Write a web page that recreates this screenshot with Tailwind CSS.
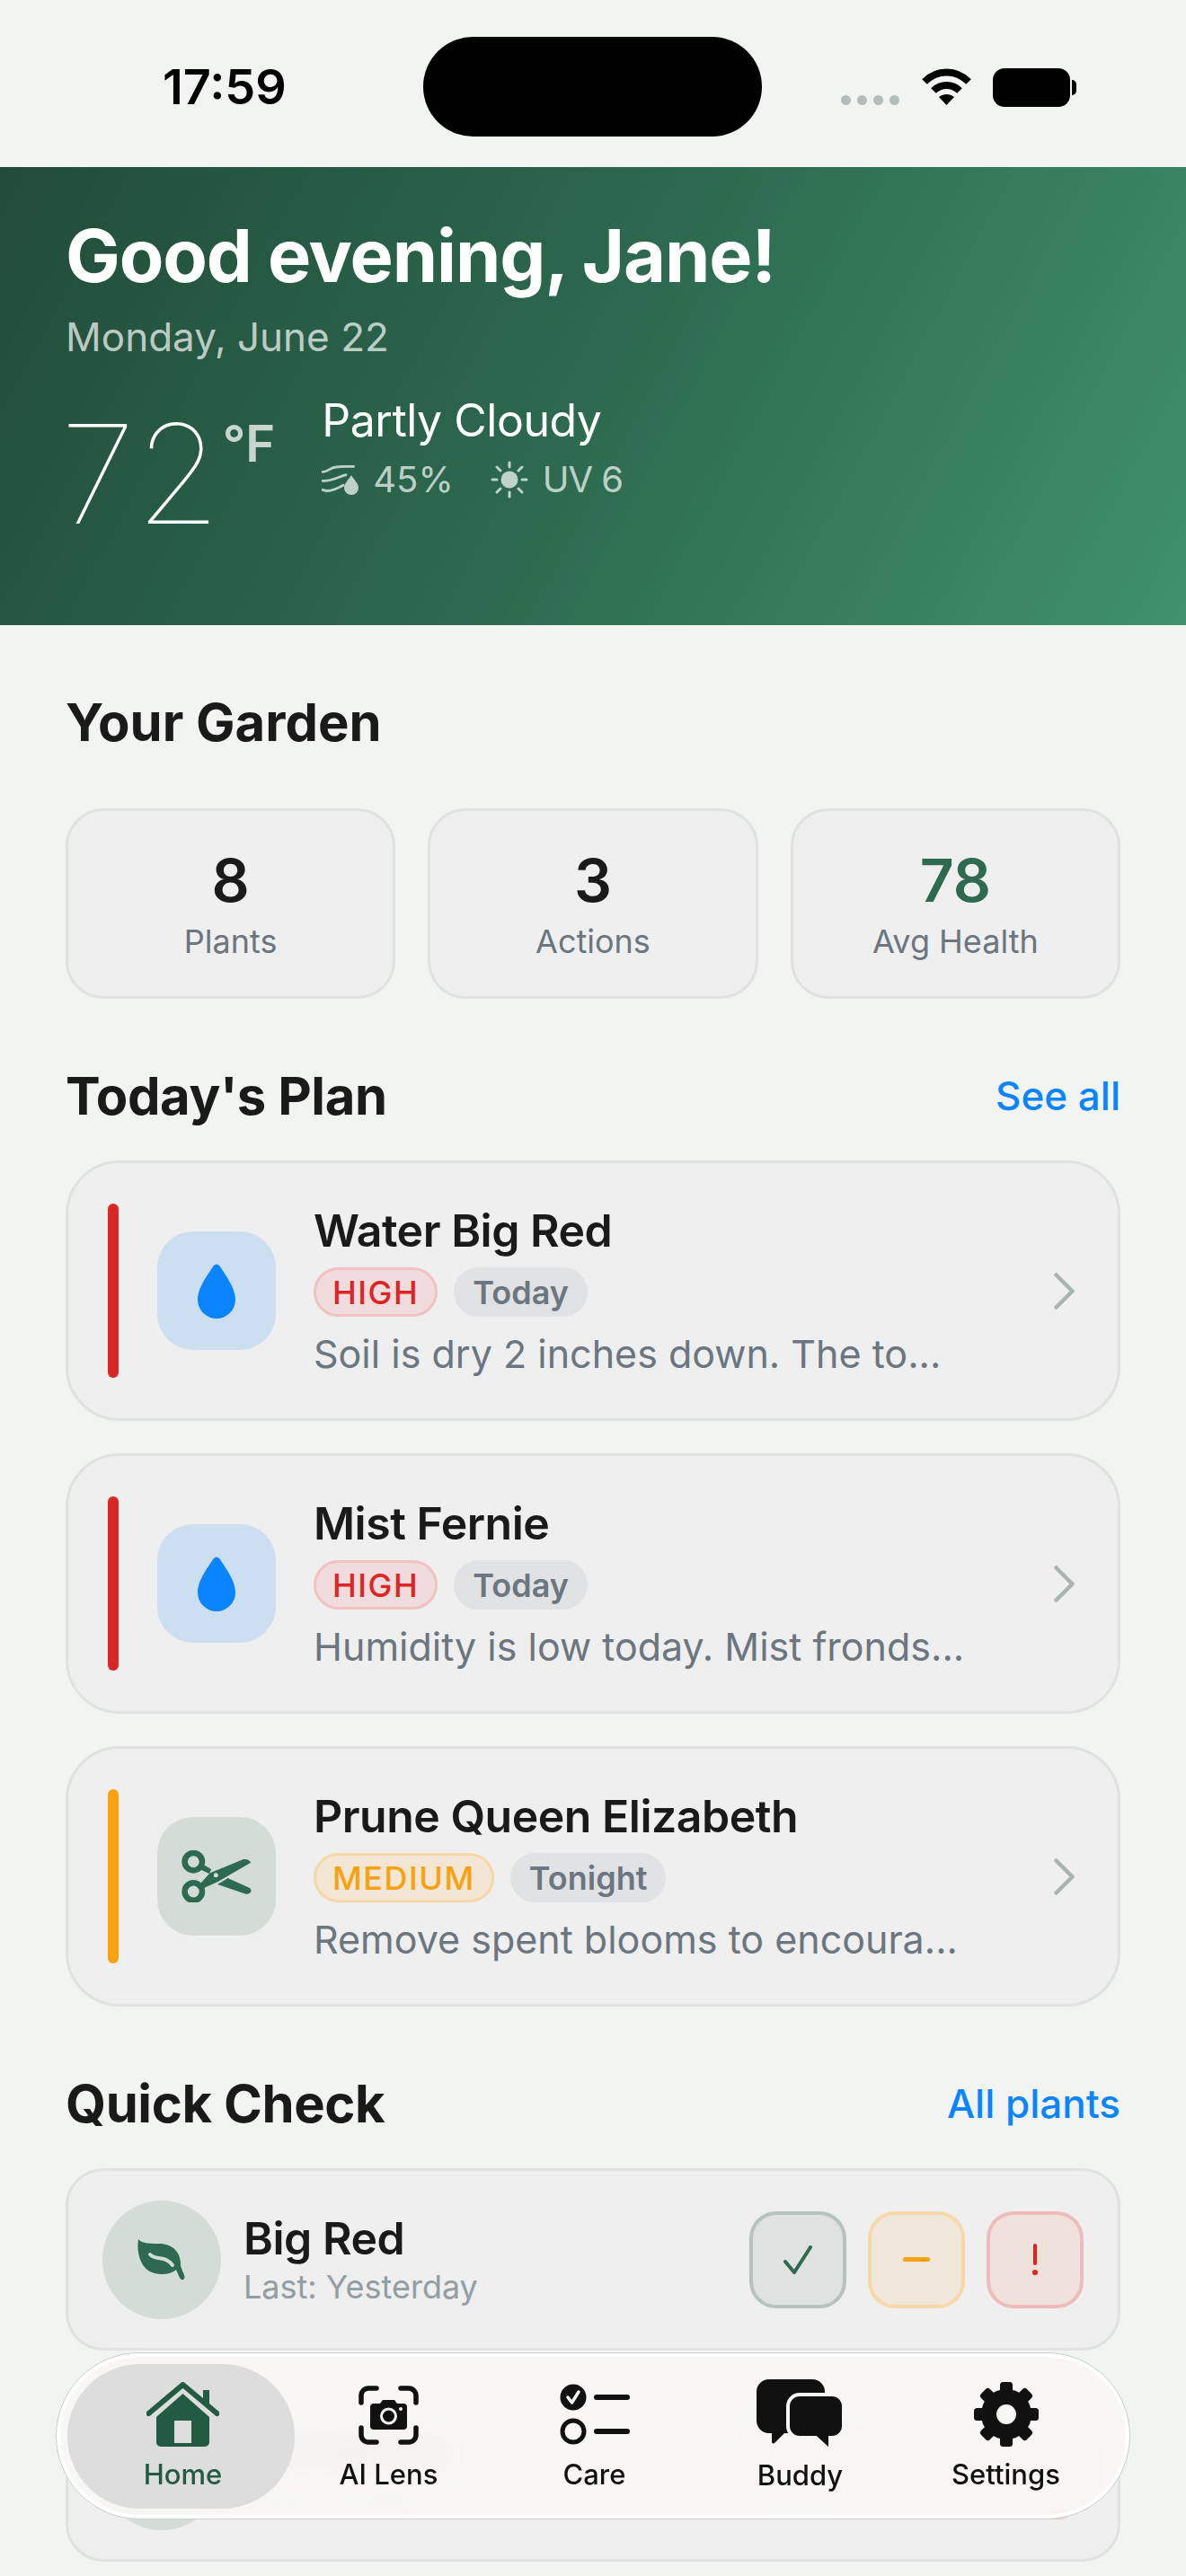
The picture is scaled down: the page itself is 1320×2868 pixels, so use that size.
<!DOCTYPE html>
<html lang="en">
<head>
    <meta charset="UTF-8">
    <title>Garden Home</title>
    <script src="https://cdn.jsdelivr.net/npm/@tailwindcss/browser@4"></script>
</head>
<body class="bg-[#f2f4f1] font-['Inter',sans-serif] text-[#1a1a1a]">
<div class="relative h-[2868px] w-[1320px] overflow-hidden">

    <!-- status bar -->
    <div class="relative flex h-[186px] items-start">
        <span class="ml-[181px] mt-[69px] text-[54px] font-semibold leading-[56px] text-black">17:59</span>
        <div class="absolute left-[471px] top-[41px] h-[111px] w-[377px] rounded-full bg-black"></div>
        <div class="absolute left-[936px] top-[106px] flex gap-[7px]">
            <span class="h-[11px] w-[11px] rounded-full bg-[#b4bcbc]"></span>
            <span class="h-[11px] w-[11px] rounded-full bg-[#b4bcbc]"></span>
            <span class="h-[11px] w-[11px] rounded-full bg-[#b4bcbc]"></span>
            <span class="h-[11px] w-[11px] rounded-full bg-[#b4bcbc]"></span>
        </div>
        <svg class="absolute left-[1025px] top-[76px]" width="57" height="42" viewBox="0 0 57 42" fill="none" stroke="#000" stroke-width="8">
            <path d="M4 15 C18 1 39 1 53 15"/>
            <path d="M14 25 C22 17 35 17 43 25"/>
            <path d="M28.500 41 L20 32 C25 28 32 28 37 32 Z" fill="#000" stroke="none"/>
        </svg>
        <div class="absolute left-[1105px] top-[76px] h-[43px] w-[86px] rounded-[13px] bg-black"></div>
        <div class="absolute left-[1193px] top-[89px] h-[17px] w-[5px] rounded-r-full bg-black"></div>
    </div>

    <!-- hero -->
    <div class="h-[510px] bg-[linear-gradient(118deg,#214c39_0%,#2d6a4f_50%,#40916c_100%)] px-[73px] pt-[49px] text-white">
        <h1 class="text-[81px] font-bold leading-[100px] tracking-[-1.100px]">Good evening, Jane!</h1>
        <p class="mt-[13px] text-[44px] leading-[54px] text-white/70">Monday, June 22</p>
        <div class="mt-[36px] flex items-start">
            <span class="-ml-[6px] text-[153px] font-thin leading-[180px]">72</span>
            <span class="ml-[2px] mt-[26px] text-[56px] font-semibold leading-[60px] text-white/75">°F</span>
            <div class="ml-[52px]">
                <p class="text-[50px] leading-[60px] tracking-[-0.500px]">Partly Cloudy</p>
                <div class="mt-[13px] flex items-center text-[40px] leading-[46px] text-white/70">
                    <svg width="42" height="33" viewBox="0 0 42 33" fill="none" stroke="currentColor" stroke-width="2.800" stroke-linecap="round">
                        <path d="M1 7.300 C6 8 10 2.300 16 2 C22 1 29 1.300 35.500 1.500"/>
                        <path d="M1 17.300 C8 18.500 14 15 27 10.700"/>
                        <path d="M1 27.300 C6 30 14 28 24 22.300"/>
                        <path d="M33 11 C35 15 41 20 41 25 A8 8 0 0 1 25 25 C25 20 31 15 33 11 Z" fill="currentColor" stroke="none"/>
                    </svg>
                    <span class="ml-[15px]">45%</span>
                    <svg class="ml-[41px]" width="42" height="42" viewBox="0 0 42 42" fill="currentColor" stroke="currentColor" stroke-width="3" stroke-linecap="round">
                        <circle cx="21" cy="21" r="9.500" stroke="none"/>
                        <path d="M21 2v5M21 35v5M2 21h5M35 21h5M7 7l4 4M35 7l-4 4M7 35l4-4M35 35l-4-4"/>
                    </svg>
                    <span class="ml-[16px] tracking-[-1px]">UV 6</span>
                </div>
            </div>
        </div>
    </div>

    <!-- your garden -->
    <div class="px-[73px]">
        <h2 class="mt-[83px] text-[58px] font-bold leading-[50px]">Your Garden</h2>
        <div class="mt-[71px] grid grid-cols-3 gap-[36px]">
            <div class="flex h-[212px] flex-col items-center rounded-[42px] border-[3px] border-[#e0e2e1] bg-[#eeefee] pt-[37px]">
                <span class="text-[66px] font-semibold leading-[80px]">8</span>
                <span class="mt-[6px] text-[36px] leading-[44px] text-[#6b7680]">Plants</span>
            </div>
            <div class="flex h-[212px] flex-col items-center rounded-[42px] border-[3px] border-[#e0e2e1] bg-[#eeefee] pt-[37px]">
                <span class="text-[66px] font-semibold leading-[80px]">3</span>
                <span class="mt-[6px] text-[36px] leading-[44px] text-[#6b7680]">Actions</span>
            </div>
            <div class="flex h-[212px] flex-col items-center rounded-[42px] border-[3px] border-[#e0e2e1] bg-[#eeefee] pt-[37px]">
                <span class="text-[66px] font-semibold leading-[80px] text-[#2d6a4f]">78</span>
                <span class="mt-[6px] text-[36px] leading-[44px] text-[#6b7680]">Avg Health</span>
            </div>
        </div>

        <!-- today's plan -->
        <div class="mt-[80px] flex h-[56px] items-center justify-between">
            <h2 class="text-[58px] font-bold tracking-[-0.400px]">Today's Plan</h2>
            <a class="text-[44px] font-medium text-[#0a84ff]">See all</a>
        </div>
        <div class="mt-[44px] flex flex-col gap-[36px]">
            <div class="flex h-[290px] items-center rounded-[60px] border-[3px] border-[#e0e2e1] bg-[#eeefee] pl-[44px] pr-[48px]">
                <span class="h-[194px] w-[12px] rounded-full bg-[#dc2626]"></span>
                <div class="ml-[43px] flex h-[132px] w-[132px] items-center justify-center rounded-[40px] bg-[#cbdff0]">
                    <svg width="42" height="61" viewBox="0 0 42 61"><path d="M17.500 2.500 C19 0 23 0 24.500 2.500 C29 10 42 26 42 40 A21 21 0 0 1 0 40 C0 26 13 10 17.500 2.500 Z" fill="#0a84ff"/></svg>
                </div>
                <div class="ml-[42px] flex-1">
                    <p class="-mt-[1px] text-[50px] font-semibold leading-[60px] tracking-[-0.500px]">Water Big Red</p>
                    <div class="mt-[11px] flex gap-[18px]">
                        <span class="flex h-[55px] items-center rounded-full border-[3px] border-[#f1c2c2] bg-[#f0dcdc] px-[18px] text-[36px] font-medium tracking-[1.500px] text-[#dc2626]">HIGH</span>
                        <span class="flex h-[55px] items-center rounded-full bg-[#e0e2e3] px-[21px] text-[36px] font-semibold text-[#6b7680]">Today</span>
                    </div>
                    <p class="mt-[15px] text-[43px] leading-[52px] text-[#6b7680]">Soil is dry 2 inches down. The to...</p>
                </div>
                <svg width="23" height="41" viewBox="0 0 23 41" fill="none" stroke="#aab4b1" stroke-width="4.500" stroke-linecap="round" stroke-linejoin="round"><path d="M2.500 2.500 L20.500 20.500 L2.500 38.500"/></svg>
            </div>
            <div class="flex h-[290px] items-center rounded-[60px] border-[3px] border-[#e0e2e1] bg-[#eeefee] pl-[44px] pr-[48px]">
                <span class="h-[194px] w-[12px] rounded-full bg-[#dc2626]"></span>
                <div class="ml-[43px] flex h-[132px] w-[132px] items-center justify-center rounded-[40px] bg-[#cbdff0]">
                    <svg width="42" height="61" viewBox="0 0 42 61"><path d="M17.500 2.500 C19 0 23 0 24.500 2.500 C29 10 42 26 42 40 A21 21 0 0 1 0 40 C0 26 13 10 17.500 2.500 Z" fill="#0a84ff"/></svg>
                </div>
                <div class="ml-[42px] flex-1">
                    <p class="-mt-[1px] text-[50px] font-semibold leading-[60px] tracking-[-0.500px]">Mist Fernie</p>
                    <div class="mt-[11px] flex gap-[18px]">
                        <span class="flex h-[55px] items-center rounded-full border-[3px] border-[#f1c2c2] bg-[#f0dcdc] px-[18px] text-[36px] font-medium tracking-[1.500px] text-[#dc2626]">HIGH</span>
                        <span class="flex h-[55px] items-center rounded-full bg-[#e0e2e3] px-[21px] text-[36px] font-semibold text-[#6b7680]">Today</span>
                    </div>
                    <p class="mt-[15px] text-[43px] leading-[52px] text-[#6b7680]">Humidity is low today. Mist fronds...</p>
                </div>
                <svg width="23" height="41" viewBox="0 0 23 41" fill="none" stroke="#aab4b1" stroke-width="4.500" stroke-linecap="round" stroke-linejoin="round"><path d="M2.500 2.500 L20.500 20.500 L2.500 38.500"/></svg>
            </div>
            <div class="flex h-[290px] items-center rounded-[60px] border-[3px] border-[#e0e2e1] bg-[#eeefee] pl-[44px] pr-[48px]">
                <span class="h-[194px] w-[12px] rounded-full bg-[#f8a20f]"></span>
                <div class="ml-[43px] flex h-[132px] w-[132px] items-center justify-center rounded-[40px] bg-[#d3dcd7]">
                    <svg width="78" height="58" viewBox="0 0 78 58" fill="#2d6a4f">
                        <circle cx="13.300" cy="12.700" r="9.700" fill="none" stroke="#2d6a4f" stroke-width="6.500"/>
                        <circle cx="13.300" cy="46" r="9.700" fill="none" stroke="#2d6a4f" stroke-width="6.500"/>
                        <path d="M23.300 15.300 L33.300 21.300 L30.700 26 L20.700 21.300 Z"/>
                        <path d="M21.700 36.300 L31.700 25.300 L68.300 10.300 C72 9 76 11 77.300 13.700 L40 35.300 L25 42 Z"/>
                        <path d="M51.700 31 L76 42 C78 44 78 46 76 47.500 C74 49 72.500 49 71.700 48.700 L40 38 Z"/>
                        <circle cx="38.300" cy="27.700" r="2.500" fill="#d3dcd7"/>
                    </svg>
                </div>
                <div class="ml-[42px] flex-1">
                    <p class="-mt-[1px] text-[50px] font-semibold leading-[60px] tracking-[-0.500px]">Prune Queen Elizabeth</p>
                    <div class="mt-[11px] flex gap-[18px]">
                        <span class="flex h-[55px] items-center rounded-full border-[3px] border-[#f5d8a8] bg-[#f3e6d5] px-[18px] text-[36px] font-medium tracking-[1.500px] text-[#f8a20f]">MEDIUM</span>
                        <span class="flex h-[55px] items-center rounded-full bg-[#e0e2e3] px-[21px] text-[36px] font-semibold text-[#6b7680]">Tonight</span>
                    </div>
                    <p class="mt-[15px] text-[43px] leading-[52px] text-[#6b7680]">Remove spent blooms to encoura...</p>
                </div>
                <svg width="23" height="41" viewBox="0 0 23 41" fill="none" stroke="#aab4b1" stroke-width="4.500" stroke-linecap="round" stroke-linejoin="round"><path d="M2.500 2.500 L20.500 20.500 L2.500 38.500"/></svg>
            </div>
        </div>

        <!-- quick check -->
        <div class="mt-[80px] flex h-[56px] items-center justify-between">
            <h2 class="text-[58px] font-bold tracking-[-0.400px]">Quick Check</h2>
            <a class="text-[44px] font-medium text-[#0a84ff]">All plants</a>
        </div>
        <div class="mt-[44px] flex flex-col gap-[32px]">
            <div class="flex h-[203px] items-center rounded-[42px] border-[3px] border-[#e0e2e1] bg-[#eeefee] px-[38px]">
                <div class="flex h-[132px] w-[132px] items-center justify-center rounded-full bg-[#d3dcd7]">
                    <svg width="54" height="46" viewBox="0 0 54 46">
                        <path d="M1 0 C4 4 10 5 24 5 C40 5 49 16 48 30 L52 40 C54 45 49 47 47 43 L43 34 C36 40 22 41 12 35 C2 28 -1 12 1 0 Z" fill="#2d6a4f"/>
                        <path d="M14 17 C20 24 30 17 39 29" fill="none" stroke="#d3dcd7" stroke-width="4" stroke-linecap="round"/>
                    </svg>
                </div>
                <div class="ml-[25px] flex-1">
                    <p class="text-[50px] font-semibold leading-[56px] tracking-[-0.500px]">Big Red</p>
                    <p class="mt-[4px] text-[36px] leading-[44px] text-[#929ea2]">Last: Yesterday</p>
                </div>
                <div class="flex gap-[24px]">
                    <div class="flex h-[108px] w-[108px] items-center justify-center rounded-[30px] border-[4px] border-[#b8c3bf] bg-[#dfe2e0]">
                        <svg width="32" height="32" viewBox="0 0 32 32" fill="none" stroke="#2d6a4f" stroke-width="4" stroke-linecap="round" stroke-linejoin="round"><path d="M2 18 L12 30 L30 2"/></svg>
                    </div>
                    <div class="flex h-[108px] w-[108px] items-center justify-center rounded-[30px] border-[4px] border-[#f5d9a9] bg-[#f1e7da]">
                        <span class="h-[5px] w-[30px] rounded-full bg-[#f8a20f]"></span>
                    </div>
                    <div class="flex h-[108px] w-[108px] flex-col items-center justify-center gap-[5px] rounded-[30px] border-[4px] border-[#efbcbc] bg-[#efe2dc]">
                        <span class="h-[24px] w-[4px] rounded-full bg-[#dc2626]"></span>
                        <span class="h-[6px] w-[6px] rounded-full bg-[#dc2626]"></span>
                    </div>
                </div>
            </div>
            <div class="flex h-[203px] items-center rounded-[42px] border-[3px] border-[#e0e2e1] bg-[#eeefee] px-[38px]">
                <div class="flex h-[132px] w-[132px] items-center justify-center rounded-full bg-[#d3dcd7]">
                    <svg width="54" height="46" viewBox="0 0 54 46">
                        <path d="M1 0 C4 4 10 5 24 5 C40 5 49 16 48 30 L52 40 C54 45 49 47 47 43 L43 34 C36 40 22 41 12 35 C2 28 -1 12 1 0 Z" fill="#2d6a4f"/>
                    </svg>
                </div>
                <div class="ml-[25px] flex-1">
                    <p class="text-[50px] font-semibold leading-[56px] tracking-[-0.500px]">Provence</p>
                    <p class="mt-[4px] text-[36px] leading-[44px] text-[#929ea2]">Last: Today</p>
                </div>
                <div class="flex gap-[24px]">
                    <div class="h-[108px] w-[108px] rounded-[30px] border-[4px] border-[#b8c3bf] bg-[#dfe2e0]"></div>
                    <div class="h-[108px] w-[108px] rounded-[30px] border-[4px] border-[#f5d9a9] bg-[#f1e7da]"></div>
                    <div class="h-[108px] w-[108px] rounded-[30px] border-[4px] border-[#efbcbc] bg-[#efe2dc]"></div>
                </div>
            </div>
        </div>
    </div>

    <!-- tab bar -->
    <nav class="absolute left-[62px] top-[2619px] flex h-[186px] w-[1196px] items-start rounded-full border-[1.500px] border-[#c9d0cd] bg-[#f8f7f5]/95 pl-[26px] pt-[32px] shadow-[inset_0_0_0_4px_#ffffff] backdrop-blur-md">
        <div class="absolute left-[12px] top-[12px] h-[161px] w-[253px] rounded-full bg-[#dcdddc]"></div>
        <div class="relative flex w-[229px] flex-col items-center text-[#235a42]">
            <svg width="81" height="72" viewBox="0 0 81 72" fill="#235a42">
                <path d="M2.500 35 L40.500 3 L78.500 35" fill="none" stroke="#235a42" stroke-width="6" stroke-linecap="round" stroke-linejoin="round"/>
                <rect x="63" y="9" width="7" height="16"/>
                <path d="M40.500 13 L70 39 V67 A5 5 0 0 1 65 72 H16 A5 5 0 0 1 11 67 V39 Z"/>
                <rect x="31" y="43" width="19" height="25" fill="#dcdddc"/>
            </svg>
            <span class="mt-[12px] text-[31px] font-medium leading-[38px]">Home</span>
        </div>
        <div class="relative flex w-[229px] flex-col items-center text-[#111]">
            <svg class="mb-[2px] mt-[4px]" width="67" height="66" viewBox="0 0 67 66" fill="none" stroke="#111" stroke-width="5.500" stroke-linecap="round">
                <path d="M3 19 V11 A8 8 0 0 1 11 3 H20"/>
                <path d="M47 3 H56 A8 8 0 0 1 64 11 V19"/>
                <path d="M3 47 V55 A8 8 0 0 0 11 63 H20"/>
                <path d="M47 63 H56 A8 8 0 0 0 64 55 V47"/>
                <path d="M13 24 A4 4 0 0 1 17 20 H24 L27 16 H40 L43 20 H50 A4 4 0 0 1 54 24 V45 A4 4 0 0 1 50 49 H17 A4 4 0 0 1 13 45 Z" fill="#111" stroke="none"/>
                <circle cx="33.500" cy="34" r="8" stroke="#f5f5f3" stroke-width="3"/>
                <circle cx="47" cy="26" r="2" fill="#f5f5f3" stroke="none"/>
            </svg>
            <span class="mt-[12px] text-[31px] font-medium leading-[38px]">AI Lens</span>
        </div>
        <div class="relative flex w-[229px] flex-col items-center text-[#111]">
            <svg class="mb-[2px] mt-[2px]" width="78" height="68" viewBox="0 0 78 68" fill="none" stroke="#111" stroke-linecap="round">
                <circle cx="15" cy="15" r="14.500" fill="#111" stroke="none"/>
                <path d="M9 15 L13.500 21 L21 9" stroke="#f5f5f3" stroke-width="3.500" stroke-linejoin="round"/>
                <circle cx="15" cy="53" r="12" stroke-width="5"/>
                <path d="M41 15 H75 M41 53 H75" stroke-width="6"/>
            </svg>
            <span class="mt-[12px] text-[31px] font-medium leading-[38px]">Care</span>
        </div>
        <div class="relative flex w-[229px] flex-col items-center text-[#111]">
            <svg class="-mb-[2px] -mt-[3px]" width="97" height="78" viewBox="0 0 97 78" fill="#111">
                <path d="M14 0 H62 A14 14 0 0 1 76 14 V46 A14 14 0 0 1 62 60 H31 L20 71 C18 72 17 71 17 69 V60 H14 A14 14 0 0 1 0 46 V14 A14 14 0 0 1 14 0 Z"/>
                <path d="M48 17 H84 A13 13 0 0 1 97 30 V52 A13 13 0 0 1 84 65 H82 V76 C82 78 80 78 79 77 L66 65 H48 A13 13 0 0 1 35 52 V30 A13 13 0 0 1 48 17 Z" stroke="#f7f6f4" stroke-width="4"/>
            </svg>
            <span class="mt-[12px] text-[31px] font-medium leading-[38px]">Buddy</span>
        </div>
        <div class="relative flex w-[229px] flex-col items-center text-[#111]">
            <svg width="72" height="72" viewBox="0 0 72 72" fill="#111">
                <rect x="29" y="0" width="14" height="18" rx="3.500"/>
                <rect x="29" y="0" width="14" height="18" rx="3.500" transform="rotate(45 36 36)"/>
                <rect x="29" y="0" width="14" height="18" rx="3.500" transform="rotate(90 36 36)"/>
                <rect x="29" y="0" width="14" height="18" rx="3.500" transform="rotate(135 36 36)"/>
                <rect x="29" y="0" width="14" height="18" rx="3.500" transform="rotate(180 36 36)"/>
                <rect x="29" y="0" width="14" height="18" rx="3.500" transform="rotate(225 36 36)"/>
                <rect x="29" y="0" width="14" height="18" rx="3.500" transform="rotate(270 36 36)"/>
                <rect x="29" y="0" width="14" height="18" rx="3.500" transform="rotate(315 36 36)"/>
                <circle cx="36" cy="36" r="19.500" fill="none" stroke="#111" stroke-width="17"/>
            </svg>
            <span class="mt-[12px] text-[31px] font-medium leading-[38px]">Settings</span>
        </div>
    </nav>
</div>
</body>
</html>
